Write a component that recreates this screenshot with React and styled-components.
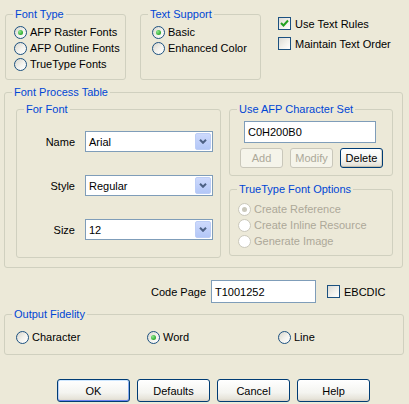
import React from "react";
import styled, { createGlobalStyle } from "styled-components";

const GlobalStyle = createGlobalStyle`
  html, body {
    margin: 0;
    padding: 0;
    background: #ece9d8;
  }
  * {
    box-sizing: border-box;
  }
`;

const Dialog = styled.div`
  width: 409px;
  height: 404px;
  background: #ece9d8;
  font-family: "Liberation Sans", Arial, sans-serif;
  font-size: 11px;
  color: #000;
  padding: 8px 0 0 4px;
  display: flex;
  flex-direction: column;
  overflow: hidden;
`;

////////////////////////////////////////////////////////
// Group boxes
const Group = styled.fieldset`
  margin: ${(p) => p.$mt || 0}px 0 0 ${(p) => p.$ml || 0}px;
  padding: 0;
  min-width: 0;
  border: 1px solid #d0d0bf;
  border-radius: 3px;
  width: ${(p) => p.$w}px;
  height: ${(p) => p.$h}px;
  flex: none;
`;

const Legend = styled.legend`
  margin-left: 7px;
  padding: 0 2px;
  height: 13px;
  line-height: 13px;
  color: #0046d5;
`;

const GroupBody = styled.div`
  padding: ${(p) => p.$pad || "0"};
`;

const TopRow = styled.div`
  display: flex;
  align-items: flex-start;
  padding-left: 1px;
`;

const CheckColumn = styled.div`
  display: flex;
  flex-direction: column;
  gap: 7px;
  margin: 9px 0 0 17px;
`;

////////////////////////////////////////////////////////
// Radio / checkbox
const OptionRow = styled.label`
  display: flex;
  align-items: center;
  gap: ${(p) => p.$gap || 3}px;
  height: ${(p) => p.$h || 16}px;
  margin-left: ${(p) => p.$ml || 0}px;
  color: ${(p) => (p.$disabled ? "#aca899" : "#000")};
  white-space: nowrap;
`;

const RadioDot = styled.span`
  width: 13px;
  height: 13px;
  flex: none;
  border-radius: 50%;
  border: 1px solid ${(p) => (p.$disabled ? "#cac8bb" : "#1c5180")};
  background: ${(p) =>
    p.$disabled ? "#fff" : "linear-gradient(135deg, #d8d6cc 0%, #f4f3ee 55%, #fff 100%)"};
  display: flex;
  align-items: center;
  justify-content: center;

  &::after {
    content: "";
    display: ${(p) => (p.$checked ? "block" : "none")};
    width: 5px;
    height: 5px;
    border-radius: 50%;
    background: ${(p) =>
      p.$disabled
        ? "#cac8bb"
        : "radial-gradient(circle at 35% 35%, #8ee88e, #21a121 80%)"};
  }
`;

const CheckBox = styled.span`
  width: 13px;
  height: 13px;
  flex: none;
  border: 1px solid #1c5180;
  background: linear-gradient(135deg, #dcdbd5 0%, #f2f1ec 55%, #fff 100%);
  display: flex;
  align-items: center;
  justify-content: center;
`;

function Radio({ label, checked, disabled }) {
  return (
    <OptionRow $disabled={disabled}>
      <RadioDot $checked={checked} $disabled={disabled} />
      {label}
    </OptionRow>
  );
}

function Check({ label, checked, ml }) {
  return (
    <OptionRow $h={13} $gap={4} $ml={ml}>
      <CheckBox>
        {checked && (
          <svg width="9" height="9" viewBox="0 0 9 9">
            <path
              d="M1 4 L3.5 6.5 L8 1.5"
              fill="none"
              stroke="#21a121"
              strokeWidth="2"
            />
          </svg>
        )}
      </CheckBox>
      {label}
    </OptionRow>
  );
}

////////////////////////////////////////////////////////
// Inputs
const FontGrid = styled.div`
  display: grid;
  grid-template-columns: 58px 128px;
  column-gap: 10px;
  row-gap: 23px;
  align-items: center;
  padding-top: 15px;
`;

const FieldLabel = styled.span`
  text-align: right;
  white-space: nowrap;
`;

const Combo = styled.div`
  width: 128px;
  height: 21px;
  border: 1px solid #7f9db9;
  background: #fff;
  display: flex;
  align-items: center;
  padding-left: 3px;
`;

const ComboText = styled.span`
  flex: 1;
`;

const DropButton = styled.span`
  width: 16px;
  height: 17px;
  margin-right: 1px;
  border-radius: 2px;
  border: 1px solid #bccdf6;
  background: linear-gradient(#cdd9fc, #b3c7f7);
  display: flex;
  align-items: center;
  justify-content: center;
`;

function ComboBox({ value }) {
  return (
    <Combo>
      <ComboText>{value}</ComboText>
      <DropButton>
        <svg width="8" height="5" viewBox="0 0 8 5">
          <path d="M1 0.8 L4 3.8 L7 0.8" fill="none" stroke="#4d6185" strokeWidth="2" />
        </svg>
      </DropButton>
    </Combo>
  );
}

const TextBox = styled.div`
  width: ${(p) => p.$w}px;
  height: ${(p) => p.$h || 22}px;
  margin-left: ${(p) => p.$ml || 0}px;
  border: 1px solid #7f9db9;
  background: #fff;
  display: flex;
  align-items: center;
  padding-left: 3px;
  flex: none;
`;

////////////////////////////////////////////////////////
// Buttons
const Button = styled.button`
  width: ${(p) => p.$w || 73}px;
  height: ${(p) => p.$h || 23}px;
  padding: 0;
  font: inherit;
  flex: none;
  border-radius: 3px;
  border: 1px solid ${(p) => (p.disabled ? "#c9c7ba" : "#003c74")};
  color: ${(p) => (p.disabled ? "#aca899" : "#000")};
  background: ${(p) =>
    p.disabled
      ? "#f5f4ea"
      : "linear-gradient(#ffffff 0%, #f4f4f0 60%, #e6e3d9 90%, #d6d0c5 100%)"};
  box-shadow: ${(p) =>
    p.$default
      ? "inset 0 1px 0 #cee7ff, inset 0 -1px 0 #6982ee, inset 1px 0 0 #b8d1f8, inset -1px 0 0 #89adf0"
      : p.$focus
      ? "inset 0 -1px 0 #c4bfae, inset -1px 0 0 #d8d3c4"
      : "none"};
`;

const ButtonRow = styled.div`
  display: flex;
  gap: ${(p) => p.$gap || 7}px;
  margin-top: ${(p) => p.$mt || 0}px;
  padding-left: ${(p) => p.$pl || 0}px;
`;

const ProcessBody = styled.div`
  display: flex;
  align-items: flex-start;
  gap: 8px;
  padding: 4px 0 0 11px;
`;

const RightColumn = styled.div`
  display: flex;
  flex-direction: column;
  gap: 7px;
`;

const CodePageRow = styled.div`
  display: flex;
  align-items: center;
  height: 23px;
  margin-top: 12px;
  padding-left: 140px;
`;

const CodePageLabel = styled.span`
  width: 62px;
  text-align: right;
  margin-right: 5px;
  white-space: nowrap;
`;

const FidelityGrid = styled.div`
  display: grid;
  grid-template-columns: repeat(3, 131px);
  padding: 8px 0 0 11px;
`;

export default function App() {
  return (
    <>
      <GlobalStyle />
      <Dialog>
        <TopRow>
          <Group $w={121} $h={72}>
            <Legend>Font Type</Legend>
            <GroupBody $pad="3px 0 0 8px">
              <Radio label="AFP Raster Fonts" checked />
              <Radio label="AFP Outline Fonts" />
              <Radio label="TrueType Fonts" />
            </GroupBody>
          </Group>
          <Group $w={121} $h={72} $ml={14}>
            <Legend>Text Support</Legend>
            <GroupBody $pad="3px 0 0 11px">
              <Radio label="Basic" checked />
              <Radio label="Enhanced Color" />
            </GroupBody>
          </Group>
          <CheckColumn>
            <Check label="Use Text Rules" checked />
            <Check label="Maintain Text Order" />
          </CheckColumn>
        </TopRow>

        <Group $w={399} $h={182} $mt={6}>
          <Legend>Font Process Table</Legend>
          <ProcessBody>
            <Group $w={205} $h={155}>
              <Legend>For Font</Legend>
              <FontGrid>
                <FieldLabel>Name</FieldLabel>
                <ComboBox value="Arial" />
                <FieldLabel>Style</FieldLabel>
                <ComboBox value="Regular" />
                <FieldLabel>Size</FieldLabel>
                <ComboBox value="12" />
              </FontGrid>
            </Group>
            <RightColumn>
              <Group $w={164} $h={73}>
                <Legend>Use AFP Character Set</Legend>
                <GroupBody $pad="5px 0 0 10px">
                  <TextBox $w={132} $ml={4}>
                    C0H200B0
                  </TextBox>
                  <ButtonRow $mt={5} $gap={7}>
                    <Button $w={43} $h={20} disabled>
                      Add
                    </Button>
                    <Button $w={43} $h={20} disabled>
                      Modify
                    </Button>
                    <Button $w={43} $h={20} $focus>
                      Delete
                    </Button>
                  </ButtonRow>
                </GroupBody>
              </Group>
              <Group $w={164} $h={73}>
                <Legend>TrueType Font Options</Legend>
                <GroupBody $pad="5px 0 0 8px">
                  <Radio label="Create Reference" checked disabled />
                  <Radio label="Create Inline Resource" disabled />
                  <Radio label="Generate Image" disabled />
                </GroupBody>
              </Group>
            </RightColumn>
          </ProcessBody>
        </Group>

        <CodePageRow>
          <CodePageLabel>Code Page</CodePageLabel>
          <TextBox $w={105} $h={23}>
            T1001252
          </TextBox>
          <Check label="EBCDIC" ml={11} />
        </CodePageRow>

        <Group $w={400} $h={47} $mt={5}>
          <Legend>Output Fidelity</Legend>
          <FidelityGrid>
            <Radio label="Character" />
            <Radio label="Word" checked />
            <Radio label="Line" />
          </FidelityGrid>
        </Group>

        <ButtonRow $mt={24} $pl={53}>
          <Button $default>OK</Button>
          <Button>Defaults</Button>
          <Button>Cancel</Button>
          <Button>Help</Button>
        </ButtonRow>
      </Dialog>
    </>
  );
}
